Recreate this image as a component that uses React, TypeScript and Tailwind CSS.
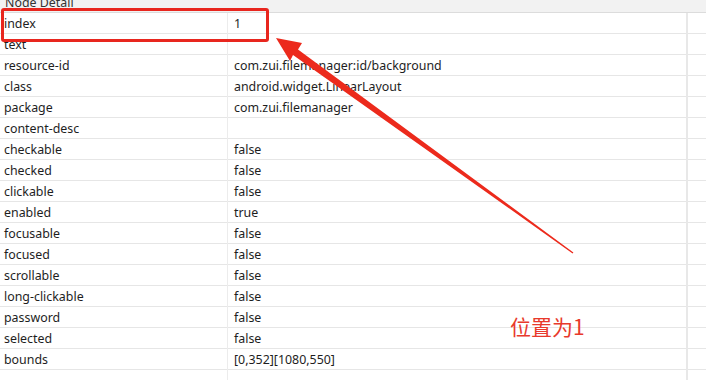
import React from 'react';

const rows: [string, string][] = [
  ['index', '1'],
  ['text', ''],
  ['resource-id', 'com.zui.filemanager:id/background'],
  ['class', 'android.widget.LinearLayout'],
  ['package', 'com.zui.filemanager'],
  ['content-desc', ''],
  ['checkable', 'false'],
  ['checked', 'false'],
  ['clickable', 'false'],
  ['enabled', 'true'],
  ['focusable', 'false'],
  ['focused', 'false'],
  ['scrollable', 'false'],
  ['long-clickable', 'false'],
  ['password', 'false'],
  ['selected', 'false'],
  ['bounds', '[0,352][1080,550]'],
];

const App: React.FC = () => {
  return (
    <div className="relative w-[706px] h-[380px] overflow-hidden bg-white text-[12.4px] text-[#1e1e1e] font-['Noto_Sans','Microsoft_YaHei',sans-serif]">
      {/* Panel title, cut at the top */}
      <div className="h-[13px] bg-[#f2f2f2] border-b border-[#dcdcdc] overflow-hidden">
        <div className="mt-[-5px] pl-[5px] leading-[16px] text-[#333]">Node Detail</div>
      </div>

      {/* Property table */}
      <div className="flex flex-col">
        {rows.map(([k, v]) => (
          <div key={k} className="grid grid-cols-[228px_460px_18px] h-[21px] border-b border-[#e6e6e6]">
            <div className="pl-[4px] pt-[1px] leading-[20px] border-r border-[#ececec] whitespace-nowrap">{k}</div>
            <div className="pl-[6px] pt-[1px] leading-[20px] border-r-2 border-[#e8e8e8] whitespace-nowrap">{v}</div>
            <div />
          </div>
        ))}
        <div className="grid grid-cols-[228px_460px_18px] h-[20px]">
          <div className="border-r border-[#ececec]" />
          <div className="border-r-2 border-[#e8e8e8]" />
          <div />
        </div>
      </div>

      {/* Annotation: highlight box */}
      <div className="absolute left-[1px] top-[8px] w-[268px] h-[34px] border-[3px] border-[#e8261e] rounded-[3px]" />

      {/* Annotation: arrow */}
      <svg className="absolute left-0 top-0" width="706" height="380" viewBox="0 0 706 380">
        <polygon
          points="276,38 302,43 298,49.5 573.4,252.6 572.6,253.4 293,55 290,61"
          fill="#ec2a1c"
        />
      </svg>

      {/* Annotation: label */}
      <div className="absolute left-[510px] top-[313px] text-[21px] leading-[26px] text-[#e8392c] font-['Noto_Sans_CJK_SC',sans-serif]">
        位置为1
      </div>
    </div>
  );
};

export default App;
